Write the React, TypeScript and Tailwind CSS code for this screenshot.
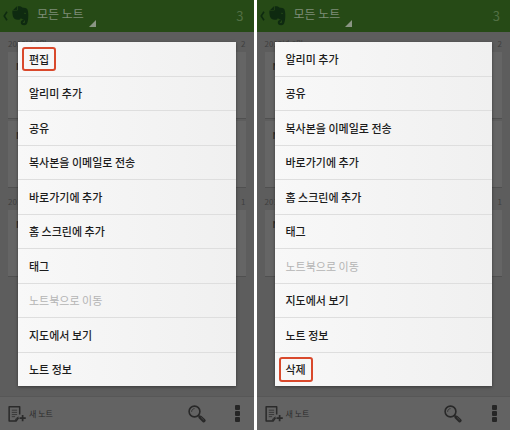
type MenuItem = {
  label: string
  disabled?: boolean
  marked?: boolean
}

type NoteGroup = {
  month: string
  count: number
  notes: { title: string }[]
}

const topItems: MenuItem[] = [
  { label: '편집', marked: true },
  { label: '알리미 추가' },
  { label: '공유' },
  { label: '복사본을 이메일로 전송' },
  { label: '바로가기에 추가' },
  { label: '홈 스크린에 추가' },
  { label: '태그' },
  { label: '노트북으로 이동', disabled: true },
  { label: '지도에서 보기' },
  { label: '노트 정보' },
]

// Same list scrolled down by one row
const bottomItems: MenuItem[] = [...topItems.slice(1), { label: '삭제', marked: true }]

const groups: NoteGroup[] = [
  { month: '2013년 6월', count: 2, notes: [{ title: 'N' }, { title: 'N' }] },
  { month: '2013년', count: 1, notes: [{ title: 'N' }] },
]

function ElephantIcon() {
  return (
    <svg viewBox="0 0 18 22" className="h-[22px] w-[17px]" aria-hidden="true">
      <path d="M5.2 .8V4.6H1.2Z" fill="#0e2a10" />
      <path
        d="M6 .8C8 .4 10 .9 10.8 2C13 2.2 15.5 2.3 16.4 4C17.5 7 17.6 12 16.7 16.5C16.2 19.6 14.8 20.8 12.8 20.8C10.4 20.8 9.2 19.4 9.3 17.6C9.4 15.8 10.8 14.9 12.9 15V16.7C11.8 16.9 11.3 17.3 11.5 18C11.7 18.7 13.6 18.8 13.8 17.4C14 16 13.4 14.9 11.8 14.6C10.6 14.4 10 13.8 9.5 13C9 14.6 7.6 15.2 6 15C3.2 14.7 1.5 13.6 .9 11C.5 9.2 .2 7.2 .5 5.3H5.2C5.9 5.3 6.1 5 6.1 4.5Z"
        fill="#0e2a10"
      />
      <path d="M12.5 8.3C12.8 7.3 14.7 7.3 14.9 9C14.1 8.6 13.3 8.6 12.5 8.3Z" fill="#264a16" />
    </svg>
  )
}

function NewNoteIcon() {
  return (
    <svg viewBox="0 0 20 18" className="h-[18px] w-[19px]" fill="none" stroke="#2a2a2a" aria-hidden="true">
      <path d="M12.3 9.5V1.4H1.2V16.4H8.5L11 13" strokeWidth="1.6" strokeLinejoin="round" />
      <path d="M4 5H9.6M4 7.3H9.6M4 9.6H9.6M4 11.8H7.5" strokeWidth=".8" />
      <path d="M7.6 16C8 14 9 12.8 11.2 12.2" strokeWidth="1" />
      <path d="M15.4 10V16.6M12.1 13.3H18.7" strokeWidth="1.8" />
    </svg>
  )
}

function SearchIcon() {
  return (
    <svg viewBox="0 0 18 18" className="h-[18px] w-[18px]" fill="none" stroke="#282828" aria-hidden="true">
      <circle cx="6.5" cy="6.5" r="5.4" strokeWidth="1.6" />
      <path d="M3.6 6.8C3.7 5 4.8 3.8 6.5 3.6" strokeWidth=".8" />
      <path d="M10.3 10.3L12.2 12.2" strokeWidth="1.6" />
      <path d="M12.3 12.3L15.8 15.6" strokeWidth="3.6" strokeLinecap="round" />
      <path d="M12.8 12.2L15.8 15" stroke="#4c4c4c" strokeWidth=".8" />
    </svg>
  )
}

function Phone({ items, name }: { items: MenuItem[]; name: string }) {
  return (
    <section aria-label={name} className="relative flex min-w-0 flex-1 flex-col bg-[#5d5d5d]">
      <header className="flex h-8 items-center bg-[#264a16] pr-2 pl-[3px]">
        <button aria-label="뒤로" className="flex items-center gap-1">
          <svg viewBox="0 0 5 10" className="h-2.5 w-[5px]" fill="none" stroke="#0e2a10" strokeWidth="1.6" aria-hidden="true">
            <path d="M4 .8L1.2 5L4 9.2" />
          </svg>
          <ElephantIcon />
        </button>
        <button className="relative ml-2 h-full pr-1 pb-1 text-xs text-[#7f8d79]">
          모든 노트
          <svg viewBox="0 0 7 7" className="absolute -right-2 bottom-[5px] h-[7px] w-[7px]" aria-hidden="true">
            <path d="M7 0V7H0Z" fill="#8a9584" />
          </svg>
        </button>
        <span className="ml-auto pr-[2px] text-[13px] text-[#527044]">3</span>
      </header>

      <main className="flex-1 px-2 pt-1">
        {groups.map(group => (
          <div key={group.month} className="pb-1">
            <h2 className="flex h-4 items-center justify-between text-[8px] text-[#3f3f3f]">
              <span>{group.month}</span>
              <span>{group.count}</span>
            </h2>
            {group.notes.map((note, i) => (
              <article
                key={i}
                className="mb-[2px] h-[67px] border-b border-[#505050] bg-[#656565] px-2 pt-2 text-[9px] font-bold text-[#2c2c2c]"
              >
                {note.title}
              </article>
            ))}
          </div>
        ))}
      </main>

      <footer className="flex h-[34px] items-center border-t border-[#575757] bg-[#636363] px-2">
        <button className="flex items-center gap-[2px] text-[8px] text-[#2b2b2b]">
          <NewNoteIcon />
          새 노트
        </button>
        <button aria-label="검색" className="ml-auto">
          <SearchIcon />
        </button>
        <button aria-label="더 보기" className="ml-6 flex w-4 flex-col items-center gap-px">
          <i className="h-[5px] w-[5px] rounded-[1px] bg-[#262626]" />
          <i className="h-[5px] w-[5px] rounded-[1px] bg-[#262626]" />
          <i className="h-[5px] w-[5px] rounded-[1px] bg-[#262626]" />
        </button>
      </footer>

      {/* Context menu over the dimmed list */}
      <div className="absolute inset-0 flex px-[18px] pt-[42px] pb-11">
        <ul className="flex flex-1 flex-col divide-y divide-[#dedede] bg-linear-to-r from-[#f8f8f8] to-[#f0f0f0] shadow-[0_1px_3px_rgba(0,0,0,0.4)]">
          {items.map(item => (
            <li key={item.label} className="flex flex-1">
              <button
                disabled={item.disabled}
                className="flex flex-1 items-center px-1 text-left text-[11px] font-medium text-[#1c1c1c] disabled:font-normal disabled:text-[#b4b4b4]"
              >
                <span
                  className={`rounded-[3px] border-2 px-[5px] py-[2px] ${
                    item.marked ? 'border-[#d9492c]' : 'border-transparent'
                  }`}
                >
                  {item.label}
                </span>
              </button>
            </li>
          ))}
        </ul>
      </div>
    </section>
  )
}

export default function App() {
  return (
    <div className="flex h-screen gap-[3px] bg-white font-['Noto_Sans_CJK_KR',sans-serif]">
      <Phone name="편집 메뉴" items={topItems} />
      <Phone name="삭제 메뉴" items={bottomItems} />
    </div>
  )
}
